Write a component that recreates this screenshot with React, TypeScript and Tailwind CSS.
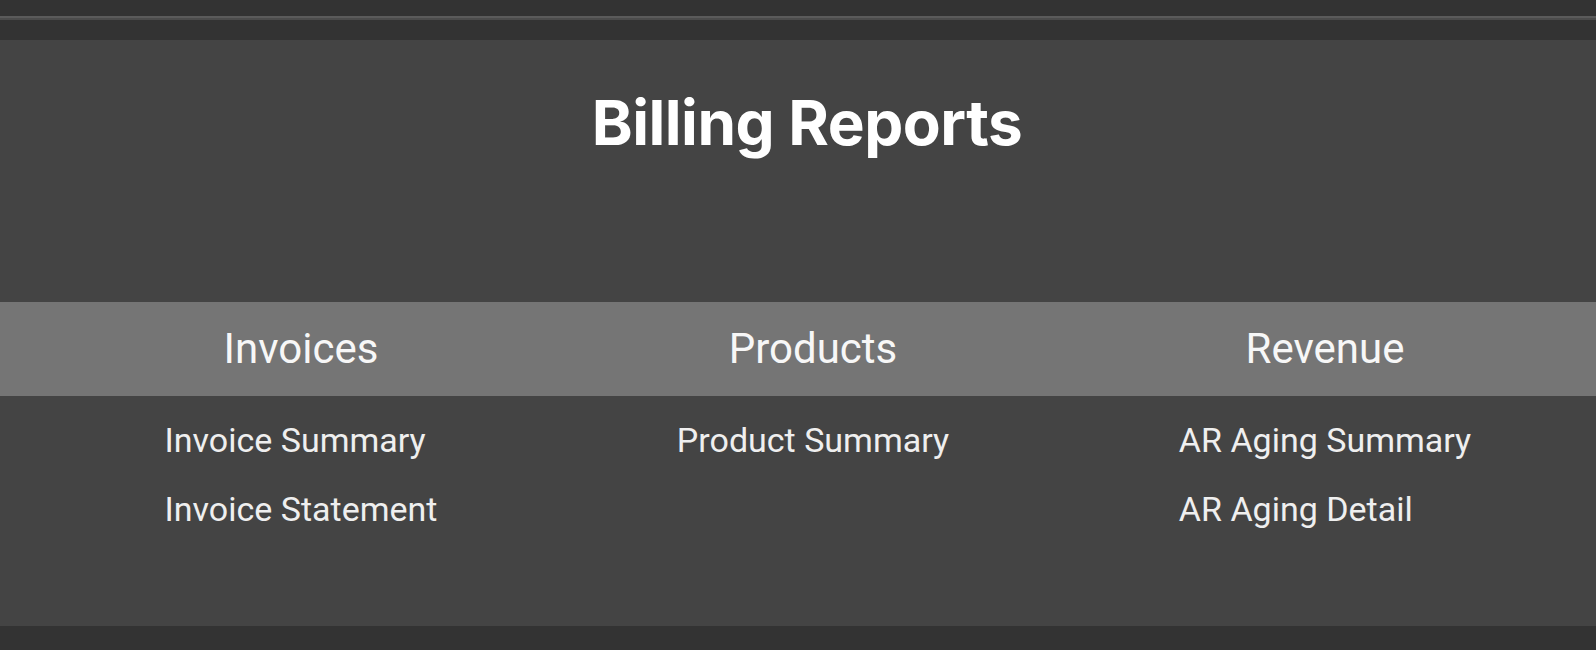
export default function App() {
  const columns = [
    { title: "Invoices", items: ["Invoice Summary", "Invoice Statement"] },
    { title: "Products", items: ["Product Summary"] },
    { title: "Revenue", items: ["AR Aging Summary", "AR Aging Detail"] },
  ];

  return (
    <div
      className="min-h-[650px] w-full bg-[#333333] flex flex-col"
      style={{ fontFamily: "Roboto, 'Noto Sans', sans-serif" }}
    >
      {/* top rule */}
      <div className="pt-[16px] pb-[20px]">
        <div className="h-[2px] bg-[#5b5b5b]" />
        <div className="h-[2px] bg-[#4c4c4c]" />
      </div>

      {/* report panel */}
      <div className="bg-[#444444] h-[586px] flex flex-col">
        <div className="pt-[52px] pl-[18px] text-center">
          <h1 className="text-[62px] leading-none font-bold text-white font-['Inter',sans-serif] tracking-[-0.5px]">
            Billing Reports
          </h1>
        </div>

        <div className="mt-[148px] h-[94px] bg-[#757575] grid grid-cols-3 pl-[45px] pr-[15px]">
          {columns.map((c) => (
            <div key={c.title} className="flex items-center justify-center">
              <span className="text-[42px] leading-none text-[#f7f7f7]">{c.title}</span>
            </div>
          ))}
        </div>

        <div className="grid grid-cols-3 pl-[45px] pr-[15px] pt-[10px]">
          {columns.map((c) => (
            <div key={c.title} className="flex justify-center">
              <ul className="text-left">
                {c.items.map((item) => (
                  <li key={item} className="text-[34px] leading-[69px] text-[#efefef] cursor-pointer">
                    {item}
                  </li>
                ))}
              </ul>
            </div>
          ))}
        </div>
      </div>
    </div>
  );
}
